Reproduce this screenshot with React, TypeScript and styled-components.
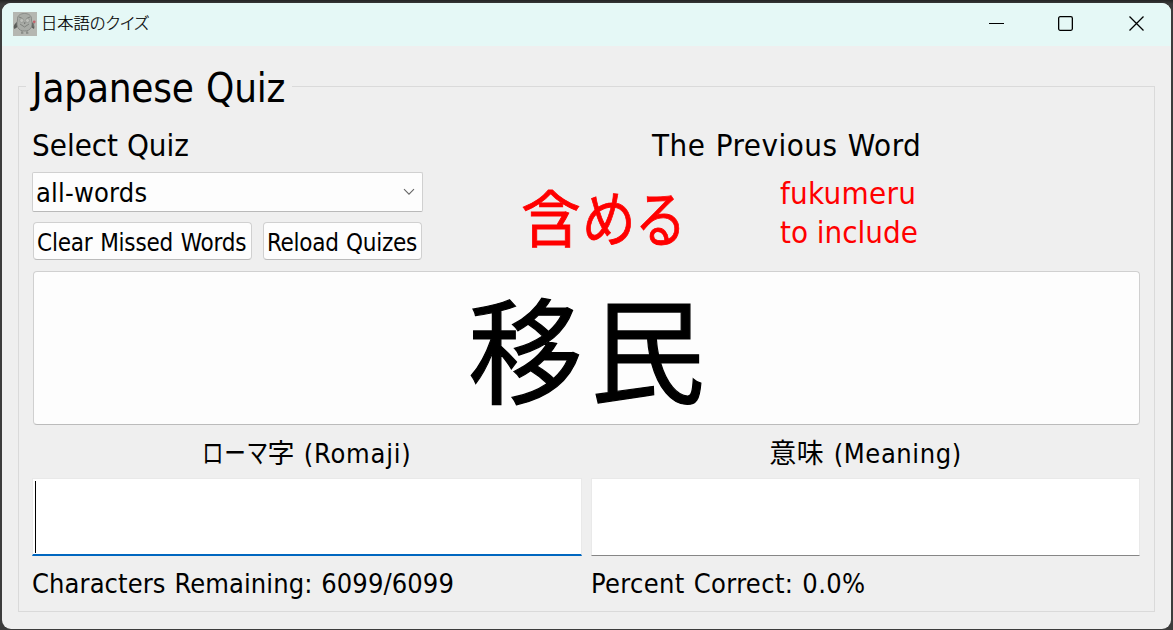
import React from "react";
import styled, { createGlobalStyle } from "styled-components";

const latin = `"DejaVu Sans Condensed", "DejaVu Sans", "Noto Sans CJK JP", sans-serif`;
const japanese = `"Noto Sans CJK JP", sans-serif`;

const GlobalStyle = createGlobalStyle`
  * { box-sizing: border-box; }
  body { margin: 0; background: #2b2b2b; overflow: hidden; }
`;

const Desktop = styled.div`
  width: 1173px;
  height: 630px;
  padding: 3px 2px 1px;
  background: linear-gradient(#242424, #3c3c3c 4px, #3c3c3c);
`;

const Window = styled.main`
  height: 626px;
  border-radius: 9px;
  overflow: hidden;
  background: #efefef;
  color: #000;
  font-family: ${latin};
  font-stretch: condensed;
  display: flex;
  flex-direction: column;
`;

const TitleBar = styled.header`
  height: 43px;
  flex: none;
  display: flex;
  align-items: center;
  padding: 0 27px 2px 11px;
  background: #e5f8f6;
`;

const Title = styled.h1`
  margin: -3px auto 0 4px;
  font: 300 16.3px/24px ${japanese};
  font-feature-settings: "palt";
  -webkit-text-stroke: 0.2px #000;
`;

const Controls = styled.div`
  display: flex;
`;

const ControlIcon = styled.svg<{ $gap?: number }>`
  width: 15px;
  height: 15px;
  margin-right: ${(p) => p.$gap ?? 0}px;
`;

const Group = styled.section`
  flex: 1;
  margin: 40px 16px 17px;
  border: 1px solid #dadada;
  padding: 0 14px 0 13px;
  display: flex;
  flex-direction: column;
`;

const Legend = styled.div`
  height: 32px;
  flex: none;
  display: flex;
  margin-left: -6px;
`;

const Text = styled.span<{ $size: number; $spacing?: number; $word?: number; $color?: string; $line?: number }>`
  font-size: ${(p) => p.$size}px;
  line-height: ${(p) => p.$line ?? 39}px;
  letter-spacing: ${(p) => p.$spacing ?? 0}px;
  word-spacing: ${(p) => p.$word ?? 0}px;
  color: ${(p) => p.$color ?? "#000"};
  white-space: pre;
`;

const LegendText = styled(Text)`
  height: 50px;
  margin-top: -24px;
  padding: 0 7px 0 6px;
  background: #efefef;
`;

const Top = styled.div`
  display: flex;
  height: 152px;
  flex: none;
`;

const Selection = styled.div`
  width: 391px;
  padding-top: 7px;
  display: flex;
  flex-direction: column;
`;

const Combo = styled.div`
  height: 40px;
  margin-top: 7px;
  padding: 0 7px 0 3px;
  display: flex;
  align-items: center;
  justify-content: space-between;
  border: 1px solid #d0d0d0;
  border-bottom-color: #b9b9b9;
  border-radius: 2px;
  background: #fdfdfd;
`;

const Buttons = styled.div`
  display: flex;
  gap: 11px;
  margin: 10px 1px 0;
`;

const Button = styled.button<{ $width: number }>`
  width: ${(p) => p.$width}px;
  height: 38px;
  padding: 3px 0 0 3px;
  display: flex;
  align-items: center;
  border: 1px solid #d0d0d0;
  border-bottom-color: #bbb;
  border-radius: 4px;
  background: #fdfdfd;
  font-family: inherit;
  font-stretch: inherit;
`;

const Previous = styled.div`
  flex: 1;
  padding: 7px 0 0 98px;
  display: grid;
  grid-template-columns: 259px 1fr;
  grid-template-rows: 48px 78px;
`;

const PreviousTitle = styled.div`
  grid-column: 1 / -1;
  padding-left: 131px;
`;

const PreviousWord = styled.div`
  display: flex;
  align-items: center;
  padding-top: 5px;
  color: #f00;
  font: 400 61px/70px ${japanese};
  -webkit-text-stroke: 0.8px #f00;
`;

const Kana = styled.span<{ $width: number; $scale: number }>`
  width: ${(p) => p.$width}px;
  white-space: nowrap;
  transform: scaleX(${(p) => p.$scale});
  transform-origin: left;
`;

const Answers = styled.div`
  display: flex;
  flex-direction: column;
`;

const Card = styled.button`
  height: 154px;
  flex: none;
  margin: 0 0 0 1px;
  border: 1px solid #d0d0d0;
  border-bottom-color: #bbb;
  border-radius: 4px;
  background: #fdfdfd;
  font: 400 115px/144px ${japanese};
  -webkit-text-stroke: 1.2px #000;
  letter-spacing: 7px;
  padding: 0 0 6px 7px;
  color: #000;
`;

const Fields = styled.div`
  display: grid;
  grid-template-columns: 550px 549px;
  column-gap: 9px;
`;

const Caption = styled.div`
  height: 53px;
  padding-top: 9px;
  display: flex;
  justify-content: center;
`;

const NarrowKana = styled.span`
  display: inline-block;
  width: 65px;
  transform: scaleX(0.8);
  transform-origin: left;
`;

const Field = styled.div<{ $focused?: boolean }>`
  height: 78px;
  padding: 2px 3px 0;
  border: 1px solid #e9e9e9;
  border-width: 1px 1px 0;
  border-bottom: ${(p) => (p.$focused ? "2px solid #0067c0" : "1px solid #868686")};
  background: #fff;
`;

const Caret = styled.div`
  width: 1px;
  height: 72px;
  margin-left: -1px;
  background: #000;
`;

const Status = styled.div`
  padding-top: 8px;
`;

const Owl = () => (
  <svg width="24" height="24" viewBox="0 0 24 24" fill="none">
    <rect width="24" height="24" fill="#b5b7b2" />
    <path d="M4 10C1 12 0 15 1.500 17L4.500 15Z M19 10c2 2 3 4 2 7l-3-2Z" fill="#5b5d5a" />
    <path d="M4.500 8C4 3 8 1.500 11.500 1.500S19 3 18.500 8c1.500 6-.5 11-7 11S3 14 4.500 8Z" fill="#a8aba6" stroke="#858783" strokeWidth=".9" />
    <path d="M6 5l3.500 1.500M17 5l-3.500 1.500M7 12l4.500 3 4.500-3M9 19v2.500M8 21h2.500M14 19v2.500M13 21h2.500" stroke="#747672" strokeWidth=".8" />
    <circle cx="8.700" cy="8.500" r="2" fill="#bec0bb" stroke="#91938f" strokeWidth=".7" />
    <circle cx="14.500" cy="8.500" r="2" fill="#bec0bb" stroke="#91938f" strokeWidth=".7" />
    <path d="M10.700 10.500h2l-1 1.700Z" fill="#676965" />
    <path d="M21 11l-1 4" stroke="#777975" />
    <circle cx="21.200" cy="9.800" r="1.400" fill="#c4626c" />
  </svg>
);

const App = () => (
  <>
    <GlobalStyle />
    <Desktop>
      <Window>
        <TitleBar>
          <Owl />
          <Title>日本語のクイズ</Title>
          <Controls>
            <ControlIcon $gap={54} viewBox="0 0 15 15">
              <path d="M0 7.500H15" stroke="#000" />
            </ControlIcon>
            <ControlIcon $gap={56} viewBox="0 0 15 15" fill="none">
              <rect x=".65" y=".65" width="13.700" height="13.700" rx="1.500" stroke="#000" strokeWidth="1.300" />
            </ControlIcon>
            <ControlIcon viewBox="0 0 15 15">
              <path d="M.5.5l14 14M14.500.5l-14 14" stroke="#000" strokeWidth="1.300" />
            </ControlIcon>
          </Controls>
        </TitleBar>
        <Group>
          <Legend>
            <LegendText $size={40} $line={50} $spacing={-0.2} $word={1}>Japanese Quiz</LegendText>
          </Legend>
          <Top>
            <Selection>
              <Text $size={31}>Select Quiz</Text>
              <Combo>
                <Text $size={27} $spacing={0.2}>all-words</Text>
                <svg width="12" height="8" viewBox="0 0 12 8" fill="none">
                  <path d="M1 1.200l5 5 5-5" stroke="#666" strokeWidth="1.100" />
                </svg>
              </Combo>
              <Buttons>
                <Button $width={219}><Text $size={24} $line={36} $spacing={-0.2} $word={1}>Clear Missed Words</Text></Button>
                <Button $width={159}><Text $size={24} $line={36} $spacing={-0.3} $word={1}>Reload Quizes</Text></Button>
              </Buttons>
            </Selection>
            <Previous>
              <PreviousTitle><Text $size={31} $spacing={0.5} $word={1}>The Previous Word</Text></PreviousTitle>
              <PreviousWord>
                <Kana $width={61} $scale={0.98}>含</Kana>
                <Kana $width={53} $scale={0.88}>め</Kana>
                <Kana $width={50} $scale={0.84}>る</Kana>
              </PreviousWord>
              <Answers>
                <Text $size={31} $spacing={0.3} $color="#f00">fukumeru</Text>
                <Text $size={31} $color="#f00">to include</Text>
              </Answers>
            </Previous>
          </Top>
          <Card>移民</Card>
          <Fields>
            <Caption><Text $size={27} $spacing={0.8}><NarrowKana>ローマ</NarrowKana>字 (Romaji)</Text></Caption>
            <Caption><Text $size={27} $spacing={0.6} $word={1}>意味 (Meaning)</Text></Caption>
            <Field $focused><Caret /></Field>
            <Field />
            <Status><Text $size={27} $spacing={0.1} $word={1}>Characters Remaining: 6099/6099</Text></Status>
            <Status><Text $size={27} $spacing={0.35} $word={1}>Percent Correct: 0.0%</Text></Status>
          </Fields>
        </Group>
      </Window>
    </Desktop>
  </>
);

export default App;
